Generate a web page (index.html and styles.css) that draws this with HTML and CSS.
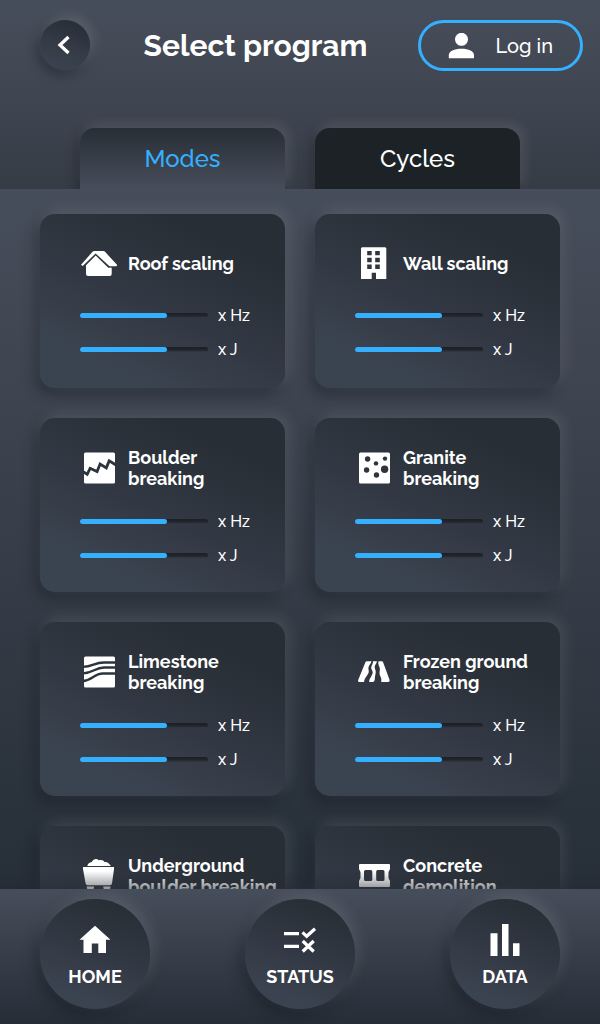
FILE: index.html
```html
<!DOCTYPE html>
<html lang="en">
<head>
<meta charset="utf-8">
<title>Select program</title>
<link rel="stylesheet" href="styles.css">
</head>
<body>
<div class="app">
  <header class="header">
    <div class="topbar">
      <button class="back" aria-label="Back"><svg width="50" height="50" viewBox="0 0 50 50"><path d="M28.500 17 20 25l8.500 8" fill="none" stroke="#fff" stroke-width="3.300"/></svg></button>
      <h1 class="title">Select program</h1>
      <button class="login"><svg width="26" height="26" viewBox="0 0 26 26" fill="#fff"><circle cx="13.500" cy="6.300" r="6.500"/><path d="M.8 25.300v-3c0-4.300 5.700-6.500 12.700-6.500s12.500 2.200 12.500 6.500v3z"/></svg><span>Log in</span></button>
    </div>
    <nav class="tabs">
      <a class="tab tab-active"><span>Modes</span></a>
      <a class="tab"><span>Cycles</span></a>
    </nav>
  </header>
  <main class="content">
    <div class="grid">
      <section class="card">
        <div class="card-head"><svg class="icon" viewBox="0 -1 40 40"><path d="M1 20.700 12.800 7.500q.6-.5 1.400-.5h9.300q.8 0 1.300.6L37 20.800q.3 1.500-1 1.500h-6.500L15.600 9.500 2.700 22z"/><path d="M15.700 11.500 28.300 23.700h3.400V30q0 2-2 2H8q-2 0-2-2v-8.700z"/></svg><h2>Roof scaling</h2></div>
        <div class="meter"><i class="track"><b></b></i><span>x Hz</span></div>
        <div class="meter"><i class="track"><b></b></i><span>x J</span></div>
      </section>
      <section class="card">
        <div class="card-head"><svg class="icon" viewBox="0 -1 40 40"><path fill-rule="evenodd" d="M7 3.300h23.300l1 1V35H21v-6.300h-4.300V35H6V4.300zM12.200 7v4.300h4.500V7zM20.200 7v4.300h4.600V7zM12.200 13.800v4.500h4.500v-4.500zM20.200 13.800v4.500h4.600v-4.500zM12.200 20.500V25h4.500v-4.500zM20.200 20.500V25h4.600v-4.500z"/></svg><h2>Wall scaling</h2></div>
        <div class="meter"><i class="track"><b></b></i><span>x Hz</span></div>
        <div class="meter"><i class="track"><b></b></i><span>x J</span></div>
      </section>
      <section class="card">
        <div class="card-head"><svg class="icon" viewBox="0 0 40 40"><rect x="4" y="4.400" width="31" height="31.200" rx="1.500"/><path class="cut thick" d="m3.500 24 3.700 2.300 2.900-6 7 3.300 3-7.500 6.200 3.800 2.900-7L36 17"/></svg><h2>Boulder<br>breaking</h2></div>
        <div class="meter"><i class="track"><b></b></i><span>x Hz</span></div>
        <div class="meter"><i class="track"><b></b></i><span>x J</span></div>
      </section>
      <section class="card">
        <div class="card-head"><svg class="icon" viewBox="0 0 40 40"><rect x="4" y="4.400" width="31" height="31.200" rx="1.500"/><g fill="#2c343e"><circle cx="12.600" cy="11" r="2.700"/><circle cx="30" cy="10.600" r="2.200"/><circle cx="21" cy="15.400" r="2.200"/><circle cx="11.600" cy="22" r="2.700"/><circle cx="29.600" cy="21.300" r="3.700"/><circle cx="21.500" cy="27" r="2.700"/></g></svg><h2>Granite<br>breaking</h2></div>
        <div class="meter"><i class="track"><b></b></i><span>x Hz</span></div>
        <div class="meter"><i class="track"><b></b></i><span>x J</span></div>
      </section>
      <section class="card">
        <div class="card-head"><svg class="icon" viewBox="0 0 40 40"><rect x="4" y="4.400" width="31" height="31.200" rx="1.500"/><path class="cut" d="M3 14.800c10 0 11-4.300 21-4.300h12M3 21.300c10 0 12-5.800 21-5.800h12M3 29c9-.5 11-7.500 20-7.500h13"/></svg><h2>Limestone<br>breaking</h2></div>
        <div class="meter"><i class="track"><b></b></i><span>x Hz</span></div>
        <div class="meter"><i class="track"><b></b></i><span>x J</span></div>
      </section>
      <section class="card">
        <div class="card-head"><svg class="icon" viewBox="0 0 40 40"><path d="M11.800 9.300h4.700c-.5 2.700-2.800 4-3.100 6.500-.3 2 .9 3 .2 5-1.200 3.200-3.600 4.200-4.600 9.200H5q-2.500 0-1.800-2l7.100-17.500q.4-1.200 1.500-1.200zM18 9.300h4c-.4 2.700-2.600 3.700-2.300 6.200.3 2 1.300 3 1 5-.4 3-.9 4-.9 7q-.3 2.500-2.300 2.500h-3.400c.4-4.500 3.300-6 3.600-9.500.2-2-1.700-2.700-1.500-4.700.2-2.500 2-3.800 1.800-6.500zM23.500 9.300h3.200q1 0 1.500 1.200L34.600 28q.4 2-1.500 2h-7c1.300-4-1.600-5.500-1.600-9 0-2 .7-3 .2-5-.6-2.500-2-3.700-1.200-6.700z"/></svg><h2>Frozen ground<br>breaking</h2></div>
        <div class="meter"><i class="track"><b></b></i><span>x Hz</span></div>
        <div class="meter"><i class="track"><b></b></i><span>x J</span></div>
      </section>
      <section class="card">
        <div class="card-head"><svg class="icon" viewBox="0 0 40 40"><path d="M7.300 10q.7-3.500 4.500-4c2-3.500 5-3.500 7-1.700 3-1 4.700 0 5.700 1.700 3.500-.3 4.500 1.500 6.500 4zM3 11h31v2l-2 14.500q-.3 1.800-2 1.800H7.500q-1.700 0-1.900-1.800L3 13zM6.700 30.500H14q0 4-3.600 4t-3.700-4zM23.300 30.500h7.200q0 4-3.600 4t-3.600-4z"/></svg><h2>Underground<br>boulder breaking</h2></div>
      </section>
      <section class="card">
        <div class="card-head"><svg class="icon" viewBox="0 0 40 40"><path fill-rule="evenodd" d="M4 9q0-1 1-1h29q1 0 1 1v4l-1.500 3v6L35 25v5q0 1-1 1H5q-1 0-1-1v-5l1.500-3v-6L4 13zM10.500 14q-1.500 0-1.500 1.500v8q0 1.500 1.500 1.500h5.300q1.500 0 1.500-1.500v-8q0-1.500-1.500-1.500zM22.700 14q-1.500 0-1.500 1.500v8q0 1.500 1.500 1.500H28q1.500 0 1.500-1.500v-8q0-1.500-1.500-1.500z"/></svg><h2>Concrete<br>demolition</h2></div>
      </section>
    </div>
  </main>
  <nav class="bottom">
    <a class="round"><svg viewBox="0 0 40 32"><path d="M20 1.700 35.500 15.700H31V29h-7.700v-9.500h-6.500V29H8.500V15.700H4.500z"/></svg><span>HOME</span></a>
    <a class="round"><svg viewBox="0 0 40 32"><path fill="none" stroke="#fff" stroke-width="3.200" d="M4 9.700h15M4 22.300h15M22.500 8.300l4.200 4L35 4.700M22.700 17l11 10.500M33.700 17l-11 10.500"/></svg><span>STATUS</span></a>
    <a class="round"><svg viewBox="0 0 40 32"><path d="M5.500 9.300h7V32h-7zM17 0h6.500v32H17zM28 19.300h6.500V32H28z"/></svg><span>DATA</span></a>
  </nav>
</div>
</body>
</html>
```

FILE: styles.css
```css
* { box-sizing: border-box; }
body { margin: 0; font-family: Raleway, Lato, "Open Sans", sans-serif; color: #fff; }
button { border: 0; padding: 0; background: none; color: inherit; font: inherit; }
svg { display: block; fill: #fff; flex: none; }
.app { width: 600px; height: 1024px; display: flex; flex-direction: column; overflow: hidden; }
.header { height: 189px; flex: none; display: flex; flex-direction: column; justify-content: space-between; background: linear-gradient(#474e5b, #3e444f 60%, #363c46); overflow: hidden; }
.topbar { display: flex; align-items: flex-start; padding: 20px 17px 0 40px; height: 71px; }
.back { width: 50px; height: 50px; border-radius: 50%; background: linear-gradient(200deg, #272e36 10%, #343a46 50%, #3a4450 90%); box-shadow: 4px -4px 12px rgba(255,255,255,.13), -3px 5px 12px rgba(20,24,30,.45); }
.title { margin: 0; width: 328px; padding-left: 3px; text-align: center; font-size: 30px; line-height: 51px; font-weight: 700; }
.login { width: 165px; height: 51px; border: 3px solid #34b0ff; border-radius: 26px; display: flex; align-items: center; padding-left: 27px; gap: 21.500px; font-size: 20px; font-weight: 500; }
.tabs { display: flex; gap: 30px; padding: 0 80px; }
.tab { width: 205px; height: 61px; border-radius: 15px 15px 0 0; display: flex; justify-content: center; align-items: center; font-size: 24px; font-weight: 500; background: #1d2226; box-shadow: 4px -4px 12px rgba(255,255,255,.11), -4px 5px 12px rgba(20,24,30,.4); }
.tab-active { background: linear-gradient(#272e36, #474e5b); color: #34b0ff; }
.content { height: 700px; flex: none; overflow: hidden; position: relative; background: linear-gradient(#474e5b, #3a414c 40%, #262e38); padding: 25px 40px; }
.content::after { content: ""; position: absolute; left: 0; right: 0; bottom: 0; height: 18px; background: linear-gradient(rgba(38,44,54,0), rgba(36,42,50,.5)); }
.grid { display: grid; grid-template-columns: 245px 245px; grid-auto-rows: 174px; gap: 30px; }
.card { border-radius: 15px; padding: 29px 0 0 40px; background: linear-gradient(205deg, #272e35 20%, #353b47 62%, #3a4450 82%); box-shadow: 4px -4px 14px rgba(255,255,255,.11), -4px 6px 14px rgba(20,24,30,.45); }
.card-head { display: flex; align-items: center; gap: 8px; min-height: 40px; margin-bottom: 15px; }
.icon { width: 40px; height: 40px; }
.cut { fill: none; stroke: #2c343e; stroke-width: 2.300; }
.thick { stroke-width: 2.800; }
h2 { margin: 0; font-size: 18px; line-height: 21px; font-weight: 700; white-space: nowrap; }
.meter { display: flex; align-items: center; gap: 10px; height: 34px; font-size: 16px; font-weight: 500; }
.track { width: 128px; height: 5px; border-radius: 3px; background: linear-gradient(#1b2026, #20262d 60%, #343b46); }
.track b { display: block; width: 87px; height: 5px; border-radius: 3px; background: #34b0ff; }
.bottom { height: 135px; flex: none; position: relative; display: flex; justify-content: space-between; padding: 10px 40px; background: linear-gradient(#474e5b, #262d37); }
.round { width: 110px; height: 110px; border-radius: 50%; display: flex; flex-direction: column; align-items: center; padding-top: 25px; gap: 10px; font-size: 18px; line-height: 22px; font-weight: 700; background: linear-gradient(200deg, #272e35 10%, #353b47 58%, #3a4450 85%); box-shadow: 4px -4px 14px rgba(255,255,255,.12), -4px 6px 14px rgba(20,24,30,.5); }
.round svg { width: 40px; height: 32px; }
```
